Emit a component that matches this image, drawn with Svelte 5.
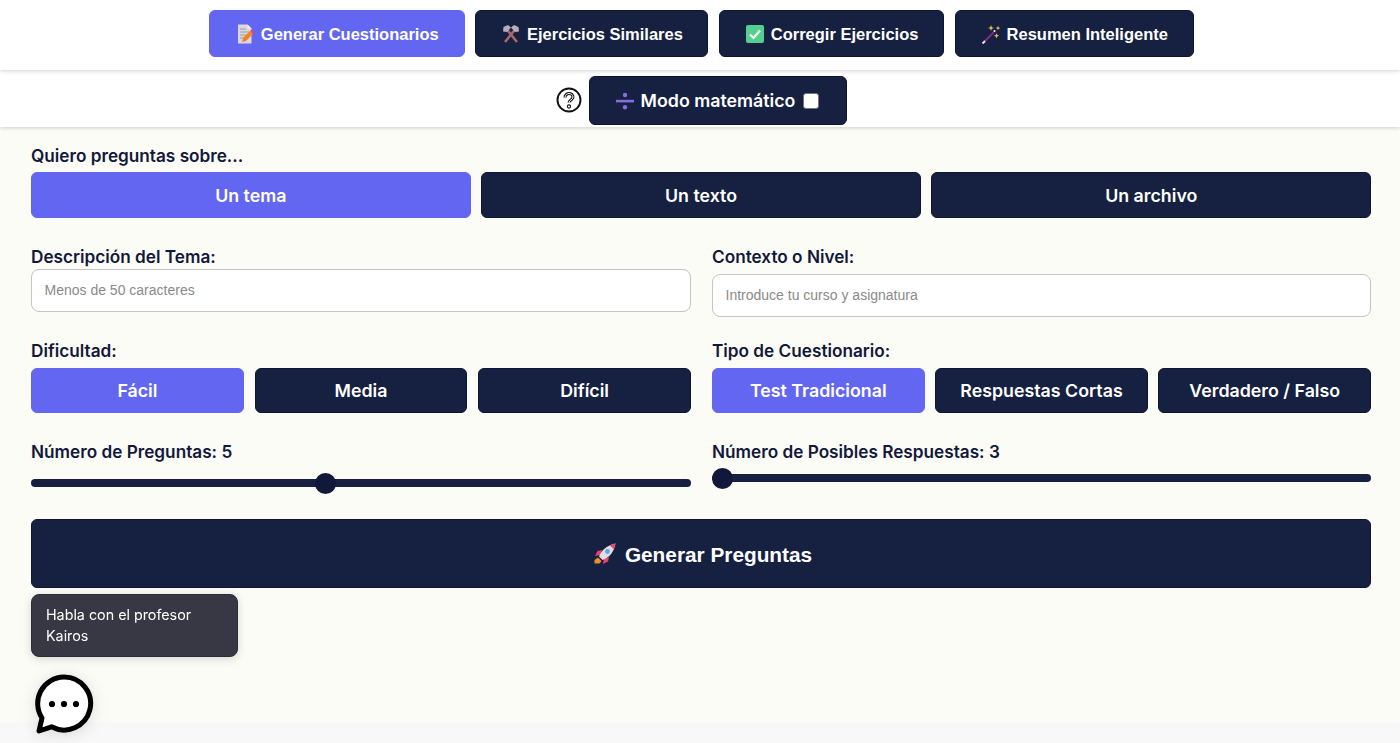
<script>
	const topTabs = [
		{ id: 'doc', label: 'Generar Cuestionarios', active: true, width: 256 },
		{ id: 'tools', label: 'Ejercicios Similares', width: 233 },
		{ id: 'check', label: 'Corregir Ejercicios', width: 225 },
		{ id: 'wand', label: 'Resumen Inteligente', width: 239 }
	];
</script>

{#snippet icon(id)}
	{#if id === 'doc'}
		<svg class="ico" viewBox="0 0 20 20">
			<path d="M3 0.5h9.500l4 4v15H3z" fill="#dcd7da" />
			<path d="M12.500 0.500l4 4h-4z" fill="#f4f0f2" />
			<path d="M5 5h6M5 8h9M5 11h8M5 14h4" stroke="#a09aa4" stroke-width="1" />
			<path d="M7 18l1-4 7-7 3 3-7 7z" fill="#f4812c" />
			<path d="M15 7l1.500-1.500 3 3L18 10z" fill="#ef3f6c" />
		</svg>
	{:else if id === 'tools'}
		<svg class="ico" viewBox="0 0 20 20">
			<path d="M4 18L14.500 5M16 18L5.500 5" stroke="#a8676a" stroke-width="2.600" />
			<path d="M2 7.500L2.500 3 7 1l3 2.500L6 8zM18 7.500L17.500 3 13 1l-3 2.500L14 8z" fill="#b4aebb" />
		</svg>
	{:else if id === 'check'}
		<svg class="ico" viewBox="0 0 20 20">
			<rect x="1" y="1" width="18" height="18" rx="2" fill="#54cf8e" />
			<path d="M5 10.500l3.500 3.500 6.500-7.500" fill="none" stroke="#fff" stroke-width="2.200" />
		</svg>
	{:else if id === 'wand'}
		<svg class="ico" viewBox="0 0 20 20">
			<path d="M3.500 17.500L13 8" stroke="#7b2d86" stroke-width="2" />
			<path d="M1.500 19.500L4 17" stroke="#e8e4ea" stroke-width="2" />
			<path d="M10 1l.8 2.200L13 4l-2.200.8L10 7l-.8-2.200L7 4l2.200-.8zM17 1.500l.6 1.900 1.900.6-1.900.7L17 6.500l-.6-1.800-1.900-.7 1.900-.6zM15.500 9l.7 2 2 .7-2 .7-.7 2-.7-2-2-.7 2-.7z" fill="#f5c04a" />
			<circle cx="13.500" cy="7" r="1" fill="#fff" />
		</svg>
	{/if}
{/snippet}

<header class="bar top">
	{#each topTabs as t}
		<button class="btn tab" class:active={t.active} style="width: {t.width}px">
			{@render icon(t.id)}
			<span>{t.label}</span>
		</button>
	{/each}
</header>

<div class="bar mode">
	<svg class="help" viewBox="0 0 26 26">
		<circle cx="13" cy="13" r="11.500" fill="none" stroke="#111" stroke-width="1.900" />
		<path d="M9 10.500c0-2.600 2-4 4-4s4 1.400 4 3.600c0 2.800-4 2.800-4 5.500" fill="none" stroke="#111" stroke-width="3" />
		<path d="M9 10.500c0-2.600 2-4 4-4s4 1.400 4 3.600c0 2.800-4 2.800-4 5.500" fill="none" stroke="#fff" stroke-width="1" />
		<circle cx="13" cy="19.500" r="1.600" fill="#fff" stroke="#111" stroke-width="1.100" />
	</svg>
	<label class="btn math">
		<svg class="div" viewBox="0 0 18 18">
			<rect x="0" y="7.800" width="18" height="2.600" fill="#8a6be0" />
			<circle cx="9" cy="3" r="2.200" fill="#8a6be0" />
			<circle cx="9" cy="15.200" r="2.200" fill="#8a6be0" />
		</svg>
		Modo matemático
		<input type="checkbox" />
	</label>
</div>

<main>
	<p class="lbl first">Quiero preguntas sobre...</p>
	<div class="choices">
		<button class="btn opt active">Un tema</button>
		<button class="btn opt">Un texto</button>
		<button class="btn opt">Un archivo</button>
	</div>

	<div class="cols inputs">
		<div>
			<p class="lbl">Descripción del Tema:</p>
			<input class="txt" type="text" placeholder="Menos de 50 caracteres" />
		</div>
		<div>
			<p class="lbl lower">Contexto o Nivel:</p>
			<input class="txt" type="text" placeholder="Introduce tu curso y asignatura" />
		</div>
	</div>

	<div class="cols levels">
		<div>
			<p class="lbl">Dificultad:</p>
			<div class="choices">
				<button class="btn opt active">Fácil</button>
				<button class="btn opt">Media</button>
				<button class="btn opt">Difícil</button>
			</div>
		</div>
		<div>
			<p class="lbl">Tipo de Cuestionario:</p>
			<div class="choices">
				<button class="btn opt active">Test Tradicional</button>
				<button class="btn opt">Respuestas Cortas</button>
				<button class="btn opt">Verdadero / Falso</button>
			</div>
		</div>
	</div>

	<div class="cols sliders">
		<div>
			<p class="lbl">Número de Preguntas: 5</p>
			<input class="range left" type="range" min="1" max="10" value="5" />
		</div>
		<div>
			<p class="lbl">Número de Posibles Respuestas: 3</p>
			<input class="range" type="range" min="3" max="6" value="3" />
		</div>
	</div>

	<button class="btn generate">
		<svg class="rocket" viewBox="0 0 22 22">
			<path d="M8 7L3.500 8 1 13l5-1zM15 14l-1 4.500-5 2.500 1-5z" fill="#ef3f6c" />
			<path d="M5 13.500C7.500 7 13 2.500 21.500 0.500 20 9 15.500 14.500 8.500 17z" fill="#e2dde2" />
			<path d="M21.500 0.500c-2 .4-3.800 1.100-5.500 2l3.500 3.500c.9-1.700 1.600-3.500 2-5.500z" fill="#ef3f6c" />
			<circle cx="13.500" cy="8.500" r="2.400" fill="#5aa9ea" />
			<path d="M4 14.500l3.500 3.500-2 2.500H0.500V17z" fill="#f08a2c" />
		</svg>
		<span>Generar Preguntas</span>
	</button>
</main>

<div class="tip">Habla con el profesor Kairos</div>
<button class="chat" aria-label="Chat">
	<svg viewBox="0 0 60 60">
		<path d="M30 3a26.500 26.500 0 1 1-12.500 49.800L5 57l3-13A26.500 26.500 0 0 1 30 3z" fill="#fff" stroke="#000" stroke-width="5" stroke-linejoin="round" />
		<circle cx="18" cy="30" r="3.100" />
		<circle cx="30" cy="30" r="3.100" />
		<circle cx="42" cy="30" r="3.100" />
	</svg>
</button>

<style>
	:global(body) {
		background: #f8f8f8;
		font-family: Inter, 'Liberation Sans', sans-serif;
	}
	.bar {
		display: flex;
		justify-content: center;
		background: #fff;
		box-shadow: 0 1px 4px rgba(0, 0, 0, 0.18);
		position: relative;
	}
	.top {
		height: 70px;
		box-sizing: border-box;
		padding: 10px 0 0 2.5px;
		gap: 10.67px;
		z-index: 2;
	}
	.mode {
		height: 57px;
		box-sizing: border-box;
		padding: 6px 0 0 2px;
		align-items: flex-start;
		gap: 7px;
		z-index: 1;
	}
	.btn {
		box-sizing: border-box;
		border: 1px solid #0d1530;
		border-radius: 6px;
		background: #162040;
		color: #fff;
		font-weight: 600;
		display: flex;
		align-items: center;
		justify-content: center;
		padding: 0;
		font-family: Inter, sans-serif;
	}
	.btn.active {
		background: #6366f1;
		border-color: #6366f1;
	}
	.tab {
		height: 47px;
		font-family: 'Liberation Sans', sans-serif;
		font-weight: 700;
		font-size: 16.5px;
		gap: 6px;
	}
	.tab span {
		position: relative;
		top: 1px;
	}
	.ico {
		width: 20px;
		height: 20px;
	}
	.help {
		width: 26px;
		height: 26px;
		margin-top: 11px;
	}
	.math {
		width: 258px;
		height: 49px;
		font-size: 17.8px;
		gap: 7px;
	}
	.div {
		width: 18px;
		height: 18px;
	}
	.math input {
		width: 16px;
		height: 16px;
		margin: 0 0 0 1px;
		appearance: none;
		background: #fff;
		border: 1px solid #767676;
		border-radius: 3px;
	}
	main {
		background: #fcfcf7;
		height: 595px;
		box-sizing: border-box;
		padding: 18px 29px 0 31px;
	}
	.lbl {
		margin: 0 0 2px;
		color: #12183a;
		font-size: 17.2px;
		font-weight: 600;
		line-height: 21px;
	}
	.first {
		margin-bottom: 6px;
	}
	.lower {
		margin-bottom: 7px;
	}
	.choices {
		display: flex;
		gap: 10.7px;
	}
	.opt {
		flex: 1 1 0;
		height: 46px;
		font-size: 17.8px;
	}
	.cols {
		display: grid;
		grid-template-columns: 660px 659px;
		gap: 21px;
	}
	.inputs {
		margin-top: 28px;
	}
	.levels {
		margin-top: 23px;
	}
	.levels .lbl {
		margin-bottom: 7px;
	}
	.levels .opt {
		height: 45px;
	}
	.sliders {
		margin-top: 28px;
		height: 78px;
	}
	.sliders .lbl {
		margin-bottom: 4px;
	}
	.txt {
		box-sizing: border-box;
		width: 100%;
		height: 43px;
		display: block;
		border: 1px solid #c4c4c4;
		border-radius: 8px;
		padding: 0 12.5px 2px;
		font-family: 'Liberation Sans', sans-serif;
		font-size: 14px;
		background: #fff;
	}
	.txt::placeholder {
		color: #8a8a8a;
	}
	.range {
		appearance: none;
		display: block;
		width: 100%;
		height: 8px;
		margin: 12px 0 0;
		background: #162040;
		border-radius: 4px;
	}
	.range.left {
		margin-top: 17px;
	}
	.range::-webkit-slider-thumb {
		appearance: none;
		width: 21px;
		height: 21px;
		border-radius: 50%;
		background: #11183a;
	}
	.generate {
		width: 100%;
		height: 69px;
		padding-left: 4px;
		font-family: 'Liberation Sans', sans-serif;
		font-weight: 700;
		font-size: 20.8px;
		gap: 9px;
	}
	.generate span {
		position: relative;
		top: 1px;
	}
	.rocket {
		width: 22px;
		height: 22px;
	}
	.tip {
		position: fixed;
		left: 31px;
		top: 594px;
		width: 207px;
		height: 63px;
		box-sizing: border-box;
		padding: 9px 14px;
		background: #383844;
		border: 1px solid #2c2c38;
		border-radius: 8px;
		color: #fff;
		font-size: 14.3px;
		line-height: 21px;
		box-shadow: 0 2px 10px rgba(0, 0, 0, 0.15);
	}
	.chat {
		position: fixed;
		left: 34px;
		top: 674px;
		width: 60px;
		height: 60px;
		padding: 0;
		border: 0;
		background: none;
		filter: drop-shadow(0 2px 8px rgba(0, 0, 0, 0.12));
	}
	.chat svg {
		display: block;
	}
</style>
